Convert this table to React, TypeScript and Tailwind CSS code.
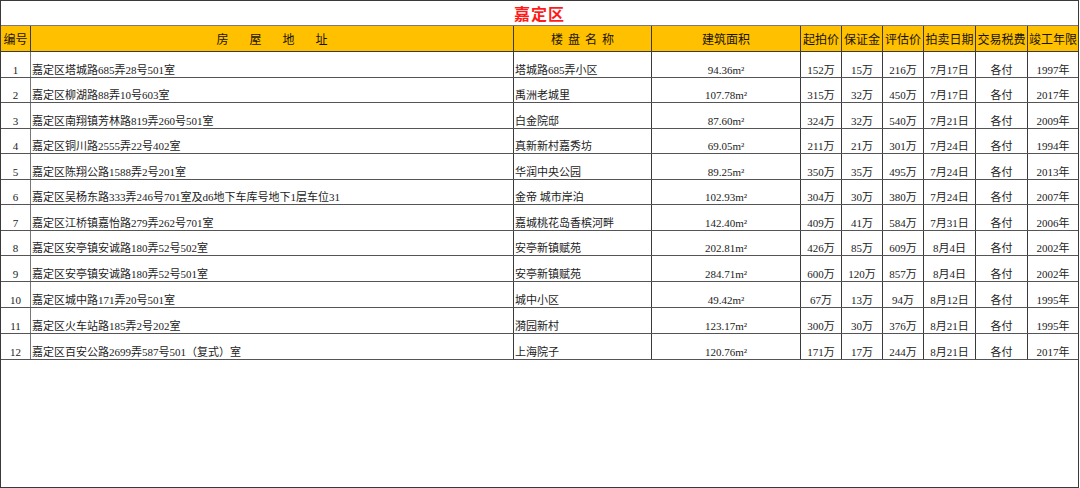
import React from 'react';

type Row = {
  no: number;
  address: string;
  estate: string;
  area: string;
  start: string;
  deposit: string;
  appraisal: string;
  date: string;
  tax: string;
  year: string;
};

const rows: Row[] = [
  { no: 1, address: '嘉定区塔城路685弄28号501室', estate: '塔城路685弄小区', area: '94.36', start: '152万', deposit: '15万', appraisal: '216万', date: '7月17日', tax: '各付', year: '1997年' },
  { no: 2, address: '嘉定区柳湖路88弄10号603室', estate: '禹洲老城里', area: '107.78', start: '315万', deposit: '32万', appraisal: '450万', date: '7月17日', tax: '各付', year: '2017年' },
  { no: 3, address: '嘉定区南翔镇芳林路819弄260号501室', estate: '白金院邸', area: '87.60', start: '324万', deposit: '32万', appraisal: '540万', date: '7月21日', tax: '各付', year: '2009年' },
  { no: 4, address: '嘉定区铜川路2555弄22号402室', estate: '真新新村嘉秀坊', area: '69.05', start: '211万', deposit: '21万', appraisal: '301万', date: '7月24日', tax: '各付', year: '1994年' },
  { no: 5, address: '嘉定区陈翔公路1588弄2号201室', estate: '华润中央公园', area: '89.25', start: '350万', deposit: '35万', appraisal: '495万', date: '7月24日', tax: '各付', year: '2013年' },
  { no: 6, address: '嘉定区吴杨东路333弄246号701室及d6地下车库号地下1层车位31', estate: '金帝 城市岸泊', area: '102.93', start: '304万', deposit: '30万', appraisal: '380万', date: '7月24日', tax: '各付', year: '2007年' },
  { no: 7, address: '嘉定区江桥镇嘉怡路279弄262号701室', estate: '嘉城桃花岛香槟河畔', area: '142.40', start: '409万', deposit: '41万', appraisal: '584万', date: '7月31日', tax: '各付', year: '2006年' },
  { no: 8, address: '嘉定区安亭镇安诚路180弄52号502室', estate: '安亭新镇赋苑', area: '202.81', start: '426万', deposit: '85万', appraisal: '609万', date: '8月4日', tax: '各付', year: '2002年' },
  { no: 9, address: '嘉定区安亭镇安诚路180弄52号501室', estate: '安亭新镇赋苑', area: '284.71', start: '600万', deposit: '120万', appraisal: '857万', date: '8月4日', tax: '各付', year: '2002年' },
  { no: 10, address: '嘉定区城中路171弄20号501室', estate: '城中小区', area: '49.42', start: '67万', deposit: '13万', appraisal: '94万', date: '8月12日', tax: '各付', year: '1995年' },
  { no: 11, address: '嘉定区火车站路185弄2号202室', estate: '漪园新村', area: '123.17', start: '300万', deposit: '30万', appraisal: '376万', date: '8月21日', tax: '各付', year: '1995年' },
  { no: 12, address: '嘉定区百安公路2699弄587号501（复式）室', estate: '上海院子', area: '120.76', start: '171万', deposit: '17万', appraisal: '244万', date: '8月21日', tax: '各付', year: '2017年' },
];

// row heights to land the lines where the sheet has them
const heights = ['h-[26px]', 'h-[25px]', 'h-[26px]', 'h-[25px]', 'h-[26px]', 'h-[25px]', 'h-[26px]', 'h-[25px]', 'h-[26px]', 'h-[26px]', 'h-[26px]', 'h-[26px]'];

const cols = 'grid grid-cols-[30px_483px_138px_149px_41px_41px_41px_52px_52px_50px]';
const font = "font-['Liberation_Serif','Noto_Sans_CJK_SC',serif]";
const cjk = "font-['Noto_Sans_CJK_SC',sans-serif]";

const headers = ['起拍价', '保证金', '评估价', '拍卖日期', '交易税费', '竣工年限'];

export default function App() {
  return (
    <div className="w-[1080px] h-[488px] bg-white">
      <div className={`w-[1079px] h-[488px] border border-[#3a3a3a] flex flex-col ${font} text-[#1c1c1c]`}>
        {/* title */}
        <div className="h-[25px] shrink-0 border-b border-[#7a7a7a] flex items-center justify-center">
          <span className={`${cjk} text-[16px] font-bold text-[#ff1a1a] leading-none tracking-[1px]`}>嘉定区</span>
        </div>

        {/* header */}
        <div className={`${cols} h-[26px] shrink-0 bg-[#ffc000] border-b border-[#3a3a3a] ${cjk} text-[12px] text-[#1a1400] leading-none`}>
          <div className="border-r border-[#3a3a3a] flex items-center justify-center">编号</div>
          <div className="border-r border-[#3a3a3a] flex items-center justify-center pl-[21px] tracking-[21px]">房屋地址</div>
          <div className="border-r border-[#3a3a3a] flex items-center justify-center pl-[5px] tracking-[5px]">楼盘名称</div>
          <div className="border-r border-[#3a3a3a] flex items-center justify-center">建筑面积</div>
          {headers.map((h, i) => (
            <div
              key={h}
              className={`flex items-center justify-center whitespace-nowrap ${i < headers.length - 1 ? 'border-r border-[#3a3a3a]' : ''}`}
            >
              {h}
            </div>
          ))}
        </div>

        {/* data rows */}
        {rows.map((r, idx) => (
          <div key={r.no} className={`${cols} ${heights[idx]} shrink-0 border-b border-[#555] text-[11px] leading-[12px]`}>
            <div className="border-r border-[#777] flex items-end justify-center pb-[1px]">{r.no}</div>
            <div className="border-r border-[#3a3a3a] flex items-end pl-[1px] pb-[1px] whitespace-nowrap">{r.address}</div>
            <div className="border-r border-[#3a3a3a] flex items-end pl-[1px] pb-[1px] whitespace-nowrap">{r.estate}</div>
            <div className="border-r border-[#3a3a3a] flex items-end justify-center pb-[1px]">{r.area}m²</div>
            <div className="border-r border-[#3a3a3a] flex items-end justify-center pb-[1px]">{r.start}</div>
            <div className="border-r border-[#3a3a3a] flex items-end justify-center pb-[1px]">{r.deposit}</div>
            <div className="border-r border-[#3a3a3a] flex items-end justify-center pb-[1px]">{r.appraisal}</div>
            <div className="border-r border-[#3a3a3a] flex items-end justify-center pb-[1px]">{r.date}</div>
            <div className="border-r border-[#3a3a3a] flex items-end justify-center pb-[1px]">{r.tax}</div>
            <div className="flex items-end justify-center pb-[1px]">{r.year}</div>
          </div>
        ))}

        <div className="flex-1" />
      </div>
    </div>
  );
}
